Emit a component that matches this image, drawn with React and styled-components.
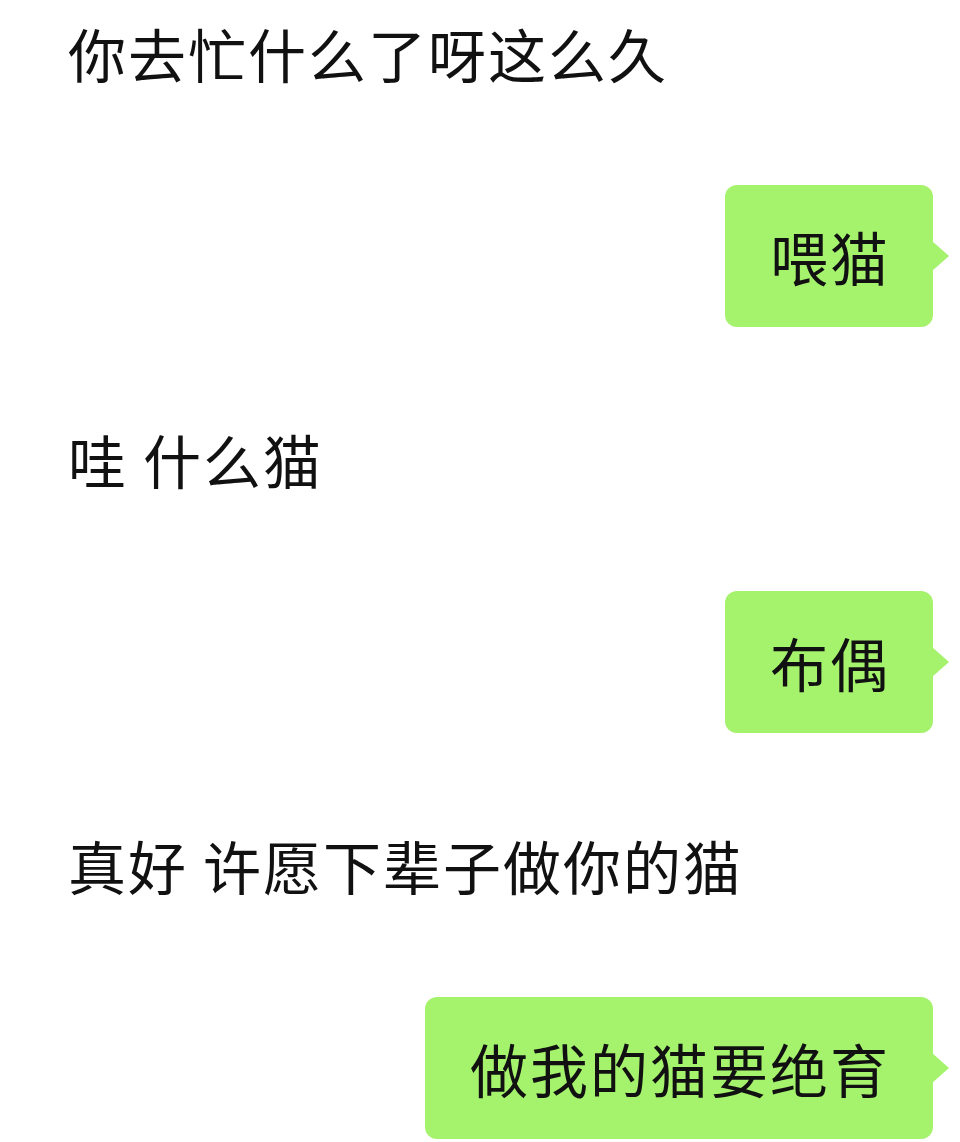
import React from 'react';
import styled, { createGlobalStyle } from 'styled-components';

const GREEN = '#a5f26d';

const messages = [
  { id: 1, mine: false, text: '你去忙什么了呀这么久' },
  { id: 2, mine: true, text: '喂猫' },
  { id: 3, mine: false, text: '哇 什么猫' },
  { id: 4, mine: true, text: '布偶' },
  { id: 5, mine: false, text: '真好 许愿下辈子做你的猫' },
  { id: 6, mine: true, text: '做我的猫要绝育' },
];

const GlobalStyle = createGlobalStyle`
  html, body {
    margin: 0;
    padding: 0;
    background: #ffffff;
  }
  body {
    font-family: "Noto Sans CJK SC", "Noto Sans", sans-serif;
    color: #111111;
  }
`;

export default function App() {
  return (
    <>
      <GlobalStyle />
      <Screen>
        <ChatList>
          {messages.map((m) => (
            <Row key={m.id} mine={m.mine}>
              <Bubble mine={m.mine}>{m.text}</Bubble>
            </Row>
          ))}
        </ChatList>
      </Screen>
    </>
  );
}

const Screen = styled.div`
  width: 960px;
  height: 1142px;
  overflow: hidden;
  background: #ffffff;
`;

// list is scrolled a little, so the first row sits partly above the top edge
const ChatList = styled.div`
  display: flex;
  flex-direction: column;
  gap: 61px;
  margin-top: -18px;
  padding: 0 27px 0 23px;
`;

const Row = styled.div`
  display: flex;
  justify-content: ${({ mine }) => (mine ? 'flex-end' : 'flex-start')};
`;

const Bubble = styled.div`
  position: relative;
  box-sizing: border-box;
  height: 142px;
  display: flex;
  align-items: center;
  padding: 0 43px 0 45px;
  font-size: 58px;
  line-height: 1;
  letter-spacing: 2px;
  white-space: nowrap;
  color: #111111;
  border-radius: 12px;
  background: ${({ mine }) => (mine ? GREEN : 'transparent')};

  &::after {
    content: '';
    display: ${({ mine }) => (mine ? 'block' : 'none')};
    position: absolute;
    right: -16px;
    top: 56px;
    width: 0;
    height: 0;
    border-top: 15px solid transparent;
    border-bottom: 15px solid transparent;
    border-left: 17px solid ${GREEN};
  }
`;
